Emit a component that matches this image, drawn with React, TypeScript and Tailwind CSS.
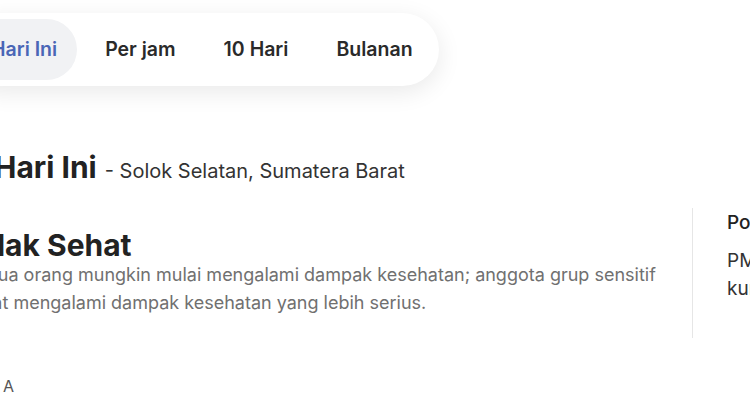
const tabs = ['Hari Ini', 'Per jam', '10 Hari', 'Bulanan'];

function TabBar({ active }: { active: string }) {
  return (
    <div className="inline-flex items-center gap-2 rounded-full bg-white p-[6px] shadow-[0_6px_24px_rgba(0,0,0,0.09)]">
      {tabs.map((tab) => (
        <button
          key={tab}
          className={
            tab === active
              ? 'h-[61px] rounded-full bg-[#f1f2f4] px-5 text-[19.5px] font-semibold text-[#4a66b6]'
              : 'h-[61px] rounded-full px-5 text-[19.5px] font-semibold text-[#2a2a2a]'
          }
        >
          {tab}
        </button>
      ))}
    </div>
  );
}

export default function App() {
  return (
    <div className="h-[420px] w-[750px] overflow-hidden bg-white font-['Inter',sans-serif]">
      <div className="-ml-[42px] flex flex-col">
        <div className="ml-[7px] mt-[13px]">
          <TabBar active="Hari Ini" />
        </div>

        <h1 className="ml-[36px] mt-[66px] flex items-baseline gap-[8px] leading-none">
          <span className="text-[30px] font-bold text-[#222]">Hari Ini</span>
          <span className="text-[20px] text-[#333]">- Solok Selatan, Sumatera Barat</span>
        </h1>

        <div className="mt-[26px] flex">
          <div className="w-[734px] shrink-0 pr-[8px] pt-[22px]">
            <div className="text-[30px] font-bold leading-none text-[#222]">Tidak Sehat</div>
            <p className="ml-[2px] mt-[1px] text-[18px] leading-[28px] text-[#707070]">
              Semua orang mungkin mulai mengalami dampak kesehatan; anggota grup sensitif
              dapat mengalami dampak kesehatan yang lebih serius.
            </p>
          </div>
          <div className="h-[130px] border-l border-[#e6e6e6] pl-[34px]">
            <div className="mt-[3px] whitespace-nowrap text-[19px] font-medium leading-[24px] text-[#222]">
              Polutan utama
            </div>
            <div className="mt-[12px] whitespace-nowrap text-[19px] leading-[28px] text-[#333]">
              PM2.5
              <br />
              kurang baik
            </div>
          </div>
        </div>

        <div className="ml-[45px] mt-[36px] text-[16px] text-[#555]">A</div>
      </div>
    </div>
  );
}
